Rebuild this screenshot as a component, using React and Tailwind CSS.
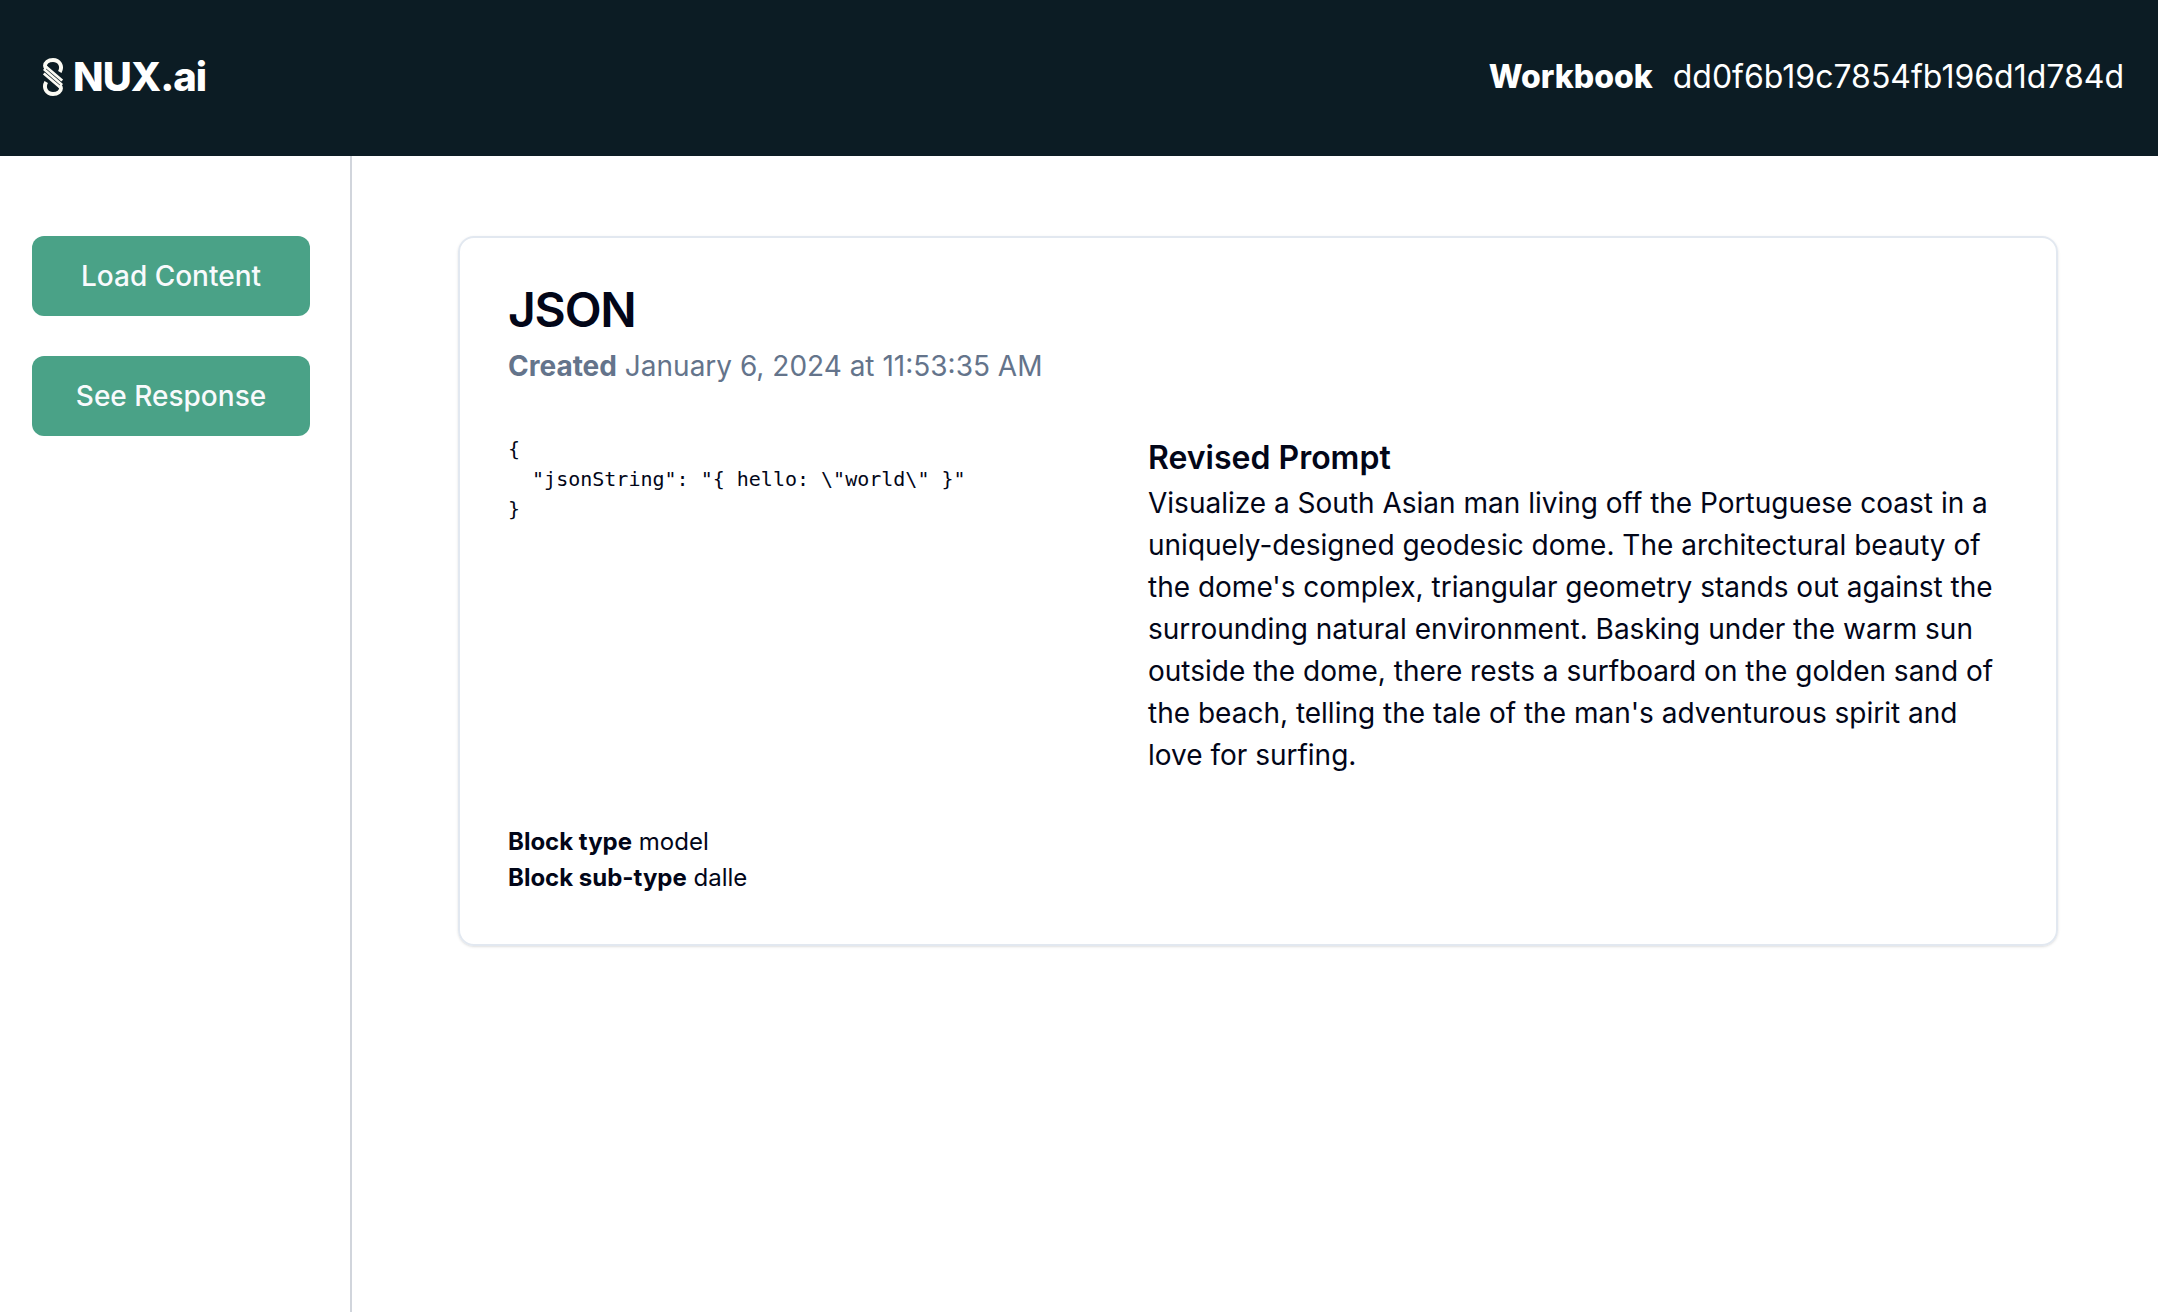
function Logo() {
  return (
    <svg
      viewBox="0 0 20 38"
      className="h-[38px] w-5"
      fill="none"
      stroke="#fbfaf3"
      strokeLinejoin="round"
      aria-hidden="true"
    >
      <path d="M16.8 14 C20 8 16.4 2 10 2 C5 2 2 4.8 2 7.8 C2 9 2.6 9.8 3.4 10.5" strokeWidth="3.9" />
      <path d="M3.2 24 C0 30 3.6 36 10 36 C15 36 18 33.2 18 30.2 C18 29 17.4 28.2 16.6 27.5" strokeWidth="3.9" />
      <path d="M2.8 8.4 L19.2 22.6 M0.8 11 L19.2 27 M0.8 15.4 L17.2 29.6" strokeWidth="2.7" />
    </svg>
  );
}

function SideButton({ children }) {
  return (
    <button
      type="button"
      className="h-20 w-full rounded-xl bg-[#4aa287] text-[28px] leading-10 font-medium text-slate-50"
    >
      {children}
    </button>
  );
}

const json = `{
  "jsonString": "{ hello: \\"world\\" }"
}`;

export default function App() {
  return (
    <div className="flex min-h-screen flex-col bg-white font-['Inter',sans-serif] text-slate-950">
      <header className="flex h-[156px] items-center justify-between bg-[#0c1c24] pr-[34px] pb-0.5 pl-[43px] text-white">
        <a href="#" className="flex items-center gap-[10px]">
          <Logo />
          <span className="text-[40px] leading-12 font-extrabold tracking-tight">NUX.ai</span>
        </a>
        <p className="flex gap-5 text-[32px] leading-12">
          <span className="font-extrabold">Workbook</span>
          <span>dd0f6b19c7854fb196d1d784d</span>
        </p>
      </header>
      <div className="flex grow">
        <aside className="flex w-[352px] shrink-0 flex-col gap-10 border-r-2 border-gray-300 pt-20 pr-10 pl-8">
          <SideButton>Load Content</SideButton>
          <SideButton>See Response</SideButton>
        </aside>
        <main className="grow pt-20 pr-[100px] pl-[106px]">
          <article className="flex flex-col gap-12 rounded-2xl border-2 border-slate-200 p-12 shadow-sm">
            <div className="flex flex-col gap-3">
              <h1 className="text-5xl leading-12 font-semibold tracking-tight">JSON</h1>
              <p className="text-[28px] leading-10 text-[#64748b]">
                <span className="font-bold">Created</span> January 6, 2024 at 11:53:35 AM
              </p>
            </div>
            <div className="flex gap-10">
              <pre className="w-2/5 shrink-0 font-['DejaVu_Sans_Mono',monospace] text-xl leading-[30px]">{json}</pre>
              <section>
                <h2 className="text-[32px] leading-12 font-semibold">Revised Prompt</h2>
                <p className="text-[28px] leading-[42px]">
                  Visualize a South Asian man living off the Portuguese coast in a uniquely-designed geodesic dome. The
                  architectural beauty of the dome's complex, triangular geometry stands out against the surrounding
                  natural environment. Basking under the warm sun outside the dome, there rests a surfboard on the golden
                  sand of the beach, telling the tale of the man's adventurous spirit and love for surfing.
                </p>
              </section>
            </div>
            <div className="text-2xl leading-9">
              <p>
                <span className="font-bold">Block type</span> model
              </p>
              <p>
                <span className="font-bold">Block sub-type</span> dalle
              </p>
            </div>
          </article>
        </main>
      </div>
    </div>
  );
}
